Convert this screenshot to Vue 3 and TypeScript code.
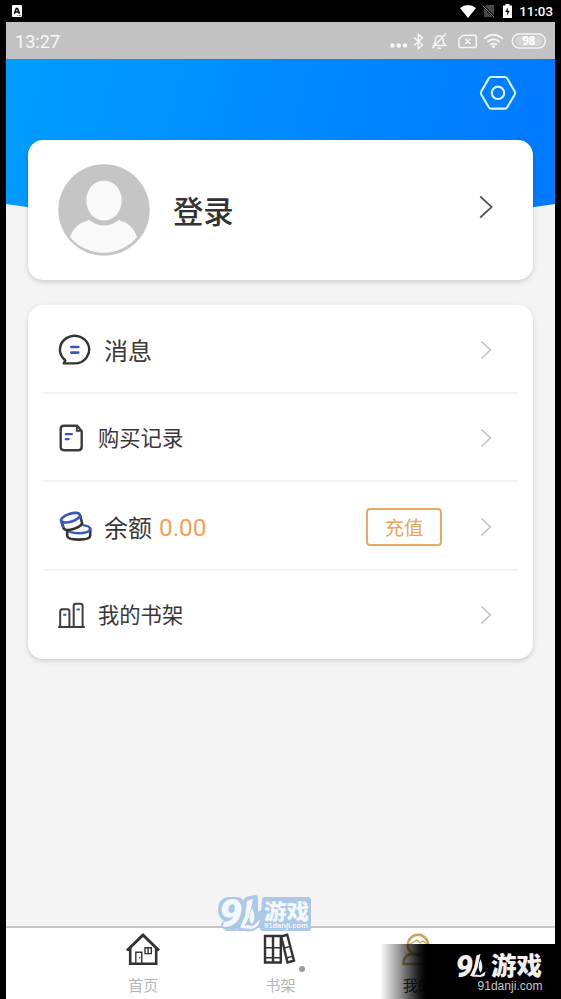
<script setup lang="ts">
interface Row {
  id: 'message' | 'orders' | 'balance' | 'shelf'
  label: string
  compact: boolean
  amount?: string
  action?: string
}

const rows: Row[] = [
  { id: 'message', label: '消息', compact: false },
  { id: 'orders', label: '购买记录', compact: true },
  { id: 'balance', label: '余额', compact: false, amount: '0.00', action: '充值' },
  { id: 'shelf', label: '我的书架', compact: true },
]
</script>

<template>
  <div class="device">
    <header class="system-bar">
      <svg class="sys-app" width="10" height="12" viewBox="0 0 10 12">
        <rect width="10" height="12" rx="1" fill="#fff" />
        <path d="M2.3 8.7 4.3 3.5h1.2l2.1 5.2M3.2 7h3.5" fill="none" stroke="#000" stroke-width="1.5" />
        <path d="M5 10.5h1M7 10.5h2" stroke="#777" stroke-width="1" />
      </svg>
      <div class="sys-right">
        <svg class="sys-wifi" width="16" height="13" viewBox="0 0 16 13"><path d="M0 3Q8-3 16 3L8 13Z" fill="#fff" /></svg>
        <svg class="sys-sim" width="13" height="14" viewBox="0 0 13 14">
          <path d="M5 1h7v12H2V4Z" fill="#484848" />
          <path d="M0 1 12 13" stroke="#000" stroke-width="2.2" />
          <path d="M.5 1.5 12 13" stroke="#777" stroke-width="1" />
        </svg>
        <svg class="sys-battery" width="9" height="14" viewBox="0 0 9 14">
          <path d="M0 1.5h2.5V0h4v1.5H9V14H0Z" fill="#fff" />
          <path d="M5.2 3 2.2 8h2.2l-.7 4 3.1-5.3H4.6Z" fill="#000" />
        </svg>
        <span class="sys-time">11:03</span>
      </div>
    </header>

    <main class="screen">
      <div class="phone-bar">
        <span class="phone-time">13:27</span>
        <svg class="phone-icons" width="160" height="24" viewBox="390 29 160 24" fill="none" stroke="#f4f4f4" stroke-width="1.5">
          <g fill="#f7f7f7" stroke="none"><circle cx="392.5" cy="45.5" r="2.3" /><circle cx="398.7" cy="45.5" r="2.3" /><circle cx="405" cy="45.5" r="2.3" /></g>
          <path d="m414 37.5 8.5 7.5-4.2 3.7V34.3l4.2 3.5-8.5 7.7" />
          <path d="M433.5 45.5c2-1.5 1.8-3.4 1.9-5.2.2-3 1.7-4.6 3.8-4.6s3.8 1.6 3.9 4.6c.1 1.8.1 3.7 2.2 5.2ZM437.6 48.3h3.4M446 33.5 432.3 48.2" />
          <path d="M463 35.2h11.5q1.8 0 1.8 1.8v8.7q0 1.8-1.8 1.8h-13.7q-1.8 0-1.8-1.8v-6.8ZM465.2 38.7l5.2 5.2m0-5.2-5.2 5.2" />
          <path d="M484.3 38.8q9.2-8 18.6 0M487.3 42q6.2-5.4 12.5 0M490.3 44.8q3.2-2.5 6.5 0" stroke-width="1.8" />
          <circle cx="493.5" cy="46.6" r="1.4" fill="#fff" stroke="none" />
          <rect x="512.3" y="34" width="33" height="14" rx="7" />
          <rect x="515" y="36" width="27.5" height="10" rx="5" fill="#d4d4d4" stroke="none" />
          <text x="528.8" y="45.4" class="battery-text" text-anchor="middle">98</text>
        </svg>
      </div>

      <section class="hero">
        <svg class="backdrop" width="549" height="168" viewBox="0 0 549 168">
          <defs>
            <linearGradient id="sky" gradientUnits="userSpaceOnUse" x1="0" y1="20" x2="500" y2="150">
              <stop offset="0" stop-color="#009dff" /><stop offset="1" stop-color="#007bff" />
            </linearGradient>
          </defs>
          <path d="M0 0H549V145Q274 187 0 145Z" fill="url(#sky)" />
        </svg>
        <svg class="settings" width="38" height="36" viewBox="0 0 38 36" fill="none" stroke="#d9f6ff" stroke-width="2.1">
          <path d="M12.2 2h13.6q1.6 0 2.4 1.4l7.4 12.8q1 1.8 0 3.6l-7.4 12.4q-.8 1.4-2.4 1.4H12.2q-1.6 0-2.4-1.4L2.4 19.8q-1-1.8 0-3.6L9.8 3.4Q10.6 2 12.2 2Z" />
          <circle cx="19" cy="17.8" r="6.2" />
        </svg>

        <div class="card profile">
          <svg class="avatar" width="92" height="92" viewBox="0 0 92 92">
            <circle cx="46" cy="46" r="45.7" fill="#c5c5c5" />
            <ellipse cx="46" cy="36.5" rx="17.7" ry="20" fill="#f9f9f9" />
            <path d="M31 56q15 11 30 0 14 4 18 17C62 94 29 94 12 73Q16 60 31 56Z" fill="#f9f9f9" />
          </svg>
          <span class="login">登录</span>
          <svg class="profile-arrow" width="14" height="24" viewBox="0 0 14 24"><path d="m1.2 1.5 11.5 10.5-11.5 10.5" fill="none" stroke="#555" stroke-width="1.7" /></svg>
        </div>
      </section>

      <section class="card menu">
        <div v-for="row in rows" :key="row.id" class="row" :class="{ compact: row.compact }">
          <div class="row-icon">
            <svg v-if="row.id === 'message'" width="33" height="32" viewBox="0 0 33 32" fill="none">
              <path d="M7.2 26.2A14.6 13.8 0 1 1 16.8 29.4H5.8L7.4 26.2" stroke="#333" stroke-width="2.4" stroke-linejoin="round" stroke-linecap="round" />
              <path d="M13.3 13h7M13.3 18.6h7" stroke="#3b57be" stroke-width="2.6" stroke-linecap="round" />
            </svg>
            <svg v-else-if="row.id === 'orders'" width="27" height="28" viewBox="0 0 27 28" fill="none">
              <path d="M6 1.7h13.2l4.5 5.5v15.5q0 3.5-3.5 3.5H6Q2.7 26.2 2.7 23V5q0-3.3 3.3-3.3Z" stroke="#3c3c3c" stroke-width="2.4" stroke-linejoin="round" />
              <path d="M18.8 2v4.8h4.5" stroke="#3c3c3c" stroke-width="1.8" />
              <path d="M7.7 10.2h6.2M7.7 15.1h3" stroke="#3b57be" stroke-width="2.2" stroke-linecap="round" />
            </svg>
            <svg v-else-if="row.id === 'balance'" class="coins" width="34" height="31" viewBox="0 0 34 31" fill="none" stroke-width="2.6">
              <path d="M8.2 17.8v7q0 3.8 11.5 3.8t11.5-3.8v-8" stroke="#333" />
              <path d="M8.2 18.8q1.7 3.4 11.5 3.4t11.5-4q0-3.2-7.5-4.1" stroke="#3b57be" stroke-width="2.4" />
              <path d="M2.2 9.5 4.5 17q1.5 3.6 10.6.7 9.1-3 7.8-6.6L20.7 3.5" fill="#fff" stroke="#333" />
              <path d="M4.5 17 2.2 9.5M20.7 3.5l1.3 4" stroke="#3b57be" />
              <ellipse cx="11.5" cy="6.7" rx="9.8" ry="4" transform="rotate(-18 11.5 6.7)" fill="#fff" stroke="#3b57be" />
            </svg>
            <svg v-else width="27" height="27" viewBox="0 0 27 27" fill="none">
              <path d="M2.2 25V9.5q0-2.2 2.2-2.2h4.8q2.2 0 2.2 2.2V25M15.7 25V4q0-2.2 2.2-2.2h4.5q2.2 0 2.2 2.2v21M.2 25H26.8" stroke="#3c3c3c" stroke-width="2" />
              <path d="M5.2 12.7h3.2M18.6 7.5h3.2" stroke="#3b57be" stroke-width="2" />
            </svg>
          </div>
          <span class="label">{{ row.label }}</span>
          <span v-if="row.amount" class="amount">{{ row.amount }}</span>
          <span class="spacer"></span>
          <button v-if="row.action" class="action">{{ row.action }}</button>
          <svg class="arrow" width="12" height="20" viewBox="0 0 12 20"><path d="m1.5 1.5 8.8 8.5-8.8 8.5" fill="none" stroke="#c2c2c2" stroke-width="1.6" /></svg>
        </div>
      </section>

      <nav class="tabs">
        <div class="tab">
          <svg width="36" height="34" viewBox="0 0 36 34" fill="none" stroke="#333">
            <path d="M2 18.5 18 3l16 15.5" stroke-width="3" />
            <path d="M5.2 16v15.8h26V16" stroke-width="2.6" />
            <path d="M10.8 31V20.3h6V31M20 15.8h6.3v5.8H20ZM23.1 15.8v5.8" stroke-width="1.4" />
            <circle cx="14.8" cy="25.8" r=".8" fill="#333" stroke="none" />
          </svg>
          <span>首页</span>
        </div>
        <div class="tab">
          <svg width="36" height="34" viewBox="0 0 36 34" fill="none" stroke="#333">
            <path d="M3 4h15.8v26.5H3ZM11 4v26.5" stroke-width="2.4" />
            <path d="m19.2 4.5 6-1.7 6.8 25.8-6.5 1.9Z" stroke-width="2.4" />
            <path d="M3 15.8h15.5M3 25.7h15.5M22.2 16l6-1.6M24.5 26l6-1.6" stroke-width="1.5" />
          </svg>
          <span>书架</span>
          <i class="dot"></i>
        </div>
        <div class="tab active">
          <svg width="36" height="34" viewBox="0 0 36 34" fill="none" stroke="#c9a35b" stroke-width="2.5">
            <circle cx="18" cy="13" r="10.2" />
            <path d="m10 12 7-4 3 3 3-2 4 3" stroke-width="1.3" />
            <path d="M3.5 32v-2Q5 22 12 22h12q7 1 8 10Z" />
          </svg>
          <span>我的</span>
        </div>
      </nav>
    </main>

    <svg class="stamp" width="100" height="46" viewBox="0 0 100 46">
      <g fill="#a9c6e6" stroke="#a9c6e6" stroke-width="6" stroke-linejoin="round">
        <path d="M12 6Q4 7 4 15q0 9 8 10l-5 6 3 3h8l8-10 1-11q-2-7-8-7Z" />
        <path d="m30 6 8-2v18l7-3-3 9q-5 8-14 6h-6ZM48 6h43v28H46Z" />
      </g>
      <g fill="#f5f8fb">
        <text x="2" y="33" class="nine" textLength="23" lengthAdjust="spacingAndGlyphs">9</text>
        <path d="m30 7 6-2-4 18-5 10-4 1 5-12Z" />
        <path d="M35 14q5 10 0 16-5-4 0-16Z" />
        <path d="m24 34 6-3 5 1q5-2 8-7-1 9-9 10Z" />
        <text x="47" y="24.5" class="game" textLength="45" lengthAdjust="spacingAndGlyphs">游戏</text>
        <text x="47" y="34" class="domain" textLength="44" lengthAdjust="spacingAndGlyphs">91danji.com</text>
      </g>
    </svg>

    <div class="banner">
      <svg width="100" height="52" viewBox="0 0 100 52" fill="#f0f0f0">
        <text x="-.5" y="29.5" class="nine" textLength="17.5" lengthAdjust="spacingAndGlyphs">9</text>
        <path d="m20.5 8.5 4-1.5-3 14-3.5 8h-4l4-8.5Z" />
        <path d="M24.5 12q3.8 9 0 14-3.8-5 0-14Z" />
        <path d="m15 29.5 5-2 4 .8 5.5-3.8-1 4.5-4 1Z" />
        <text x="35" y="28" class="game big" textLength="51" lengthAdjust="spacingAndGlyphs">游戏</text>
        <text x="21.5" y="43.3" class="domain light" textLength="65" lengthAdjust="spacingAndGlyphs">91danji.com</text>
      </svg>
    </div>
  </div>
</template>

<style>
body { margin: 0; background: #000; }
</style>

<style scoped>
* { box-sizing: border-box; }
.device {
  position: relative;
  width: 561px;
  height: 999px;
  overflow: hidden;
  background: #000;
  font-family: Roboto, "Noto Sans CJK SC", sans-serif;
}
.system-bar { height: 22px; padding: 0 8px 0 12px; display: flex; align-items: center; justify-content: space-between; }
.sys-right { display: flex; align-items: center; }
.sys-sim { margin-left: 6px; }
.sys-battery { margin-left: 8px; }
.sys-time { margin-left: 7px; color: #fff; font-size: 13.3px; font-weight: 500; line-height: 22px; padding-top: 1px; }
.screen { width: 549px; height: 977px; margin: 0 6px; background: #f4f4f4; display: flex; flex-direction: column; }
.phone-bar { height: 37px; flex: none; background: #c2c2c2; padding: 0 5px 0 9px; display: flex; align-items: center; justify-content: space-between; }
.phone-time { color: #f8f8f8; font-size: 18.1px; line-height: 37px; padding-top: 2px; }
.battery-text { font: 700 11.5px "Open Sans", sans-serif; fill: #fff; stroke: none; }
.hero { position: relative; height: 221px; flex: none; padding: 81px 22px 0; }
.backdrop { position: absolute; left: 0; top: 0; }
.settings { position: absolute; right: 38.5px; top: 16px; }
.card { position: relative; background: #fff; border-radius: 15px; box-shadow: 0 2px 5px rgba(0, 0, 0, .16); }
.profile { height: 140px; display: flex; align-items: center; padding: 0 40px 0 30px; }
.login { margin-left: 23px; padding-top: 6px; color: #333; font-size: 30.3px; font-weight: 500; line-height: 40px; }
.profile-arrow { margin-left: auto; margin-bottom: 7px; }
.menu { height: 354px; flex: none; margin: 25px 22px 0; padding: 0 15px; }
.row { height: 88.5px; display: flex; align-items: center; border-bottom: 2px solid #f3f3f3; padding: 3px 26px 0 15px; color: #383838; }
.row:last-child { border-bottom: 0; padding-top: 1px; }
.row-icon { width: 46px; display: flex; }
.compact .row-icon { width: 40px; }
.coins { margin-left: 1px; }
.label { padding-top: 4px; font-size: 24px; line-height: 34px; }
.compact .label { padding-top: 2px; font-size: 21.3px; }
.amount { margin-left: 7px; padding-top: 2px; color: #eba45a; font-size: 24.3px; line-height: 34px; }
.spacer { flex: 1; }
.action { width: 76px; height: 38px; margin-right: 38px; padding: 0; border: 2px solid #e9aa66; border-radius: 4px; background: #fff; color: #eba45a; font: 400 19.3px/35px "Noto Sans CJK SC", sans-serif; }
.tabs { margin-top: auto; height: 73px; flex: none; background: #fff; border-top: 2px solid #c6c6c6; padding: 4px 68.5px 0; display: flex; }
.tab { position: relative; flex: 1; display: flex; flex-direction: column; align-items: center; color: #b5b5b5; font-size: 15px; line-height: 20px; }
.tab span { margin-top: 10px; }
.tab.active { color: #333; }
.dot { position: absolute; left: 87px; top: 34px; width: 6px; height: 6px; border-radius: 50%; background: #9b9b9b; }
.stamp { position: absolute; left: 217px; top: 894px; opacity: .95; }
.nine { font: italic 900 38px Roboto, sans-serif; }
.banner .nine { font-size: 31px; }
.game { font: 900 21px "Noto Sans CJK SC", sans-serif; }
.game.big { font-size: 24.5px; }
.domain { font: 700 7.5px "Liberation Sans", sans-serif; }
.domain.light { font-weight: 400; font-size: 12.2px; fill: #c8c8c8; }
.banner { position: absolute; left: 380px; top: 944px; width: 181px; height: 55px; padding: 3px 5px 0 0; display: flex; justify-content: flex-end; background: linear-gradient(90deg, rgba(0, 0, 0, 0), rgba(0, 0, 0, .38) 10%, rgba(0, 0, 0, .88) 21%, #000 25%); }
</style>
